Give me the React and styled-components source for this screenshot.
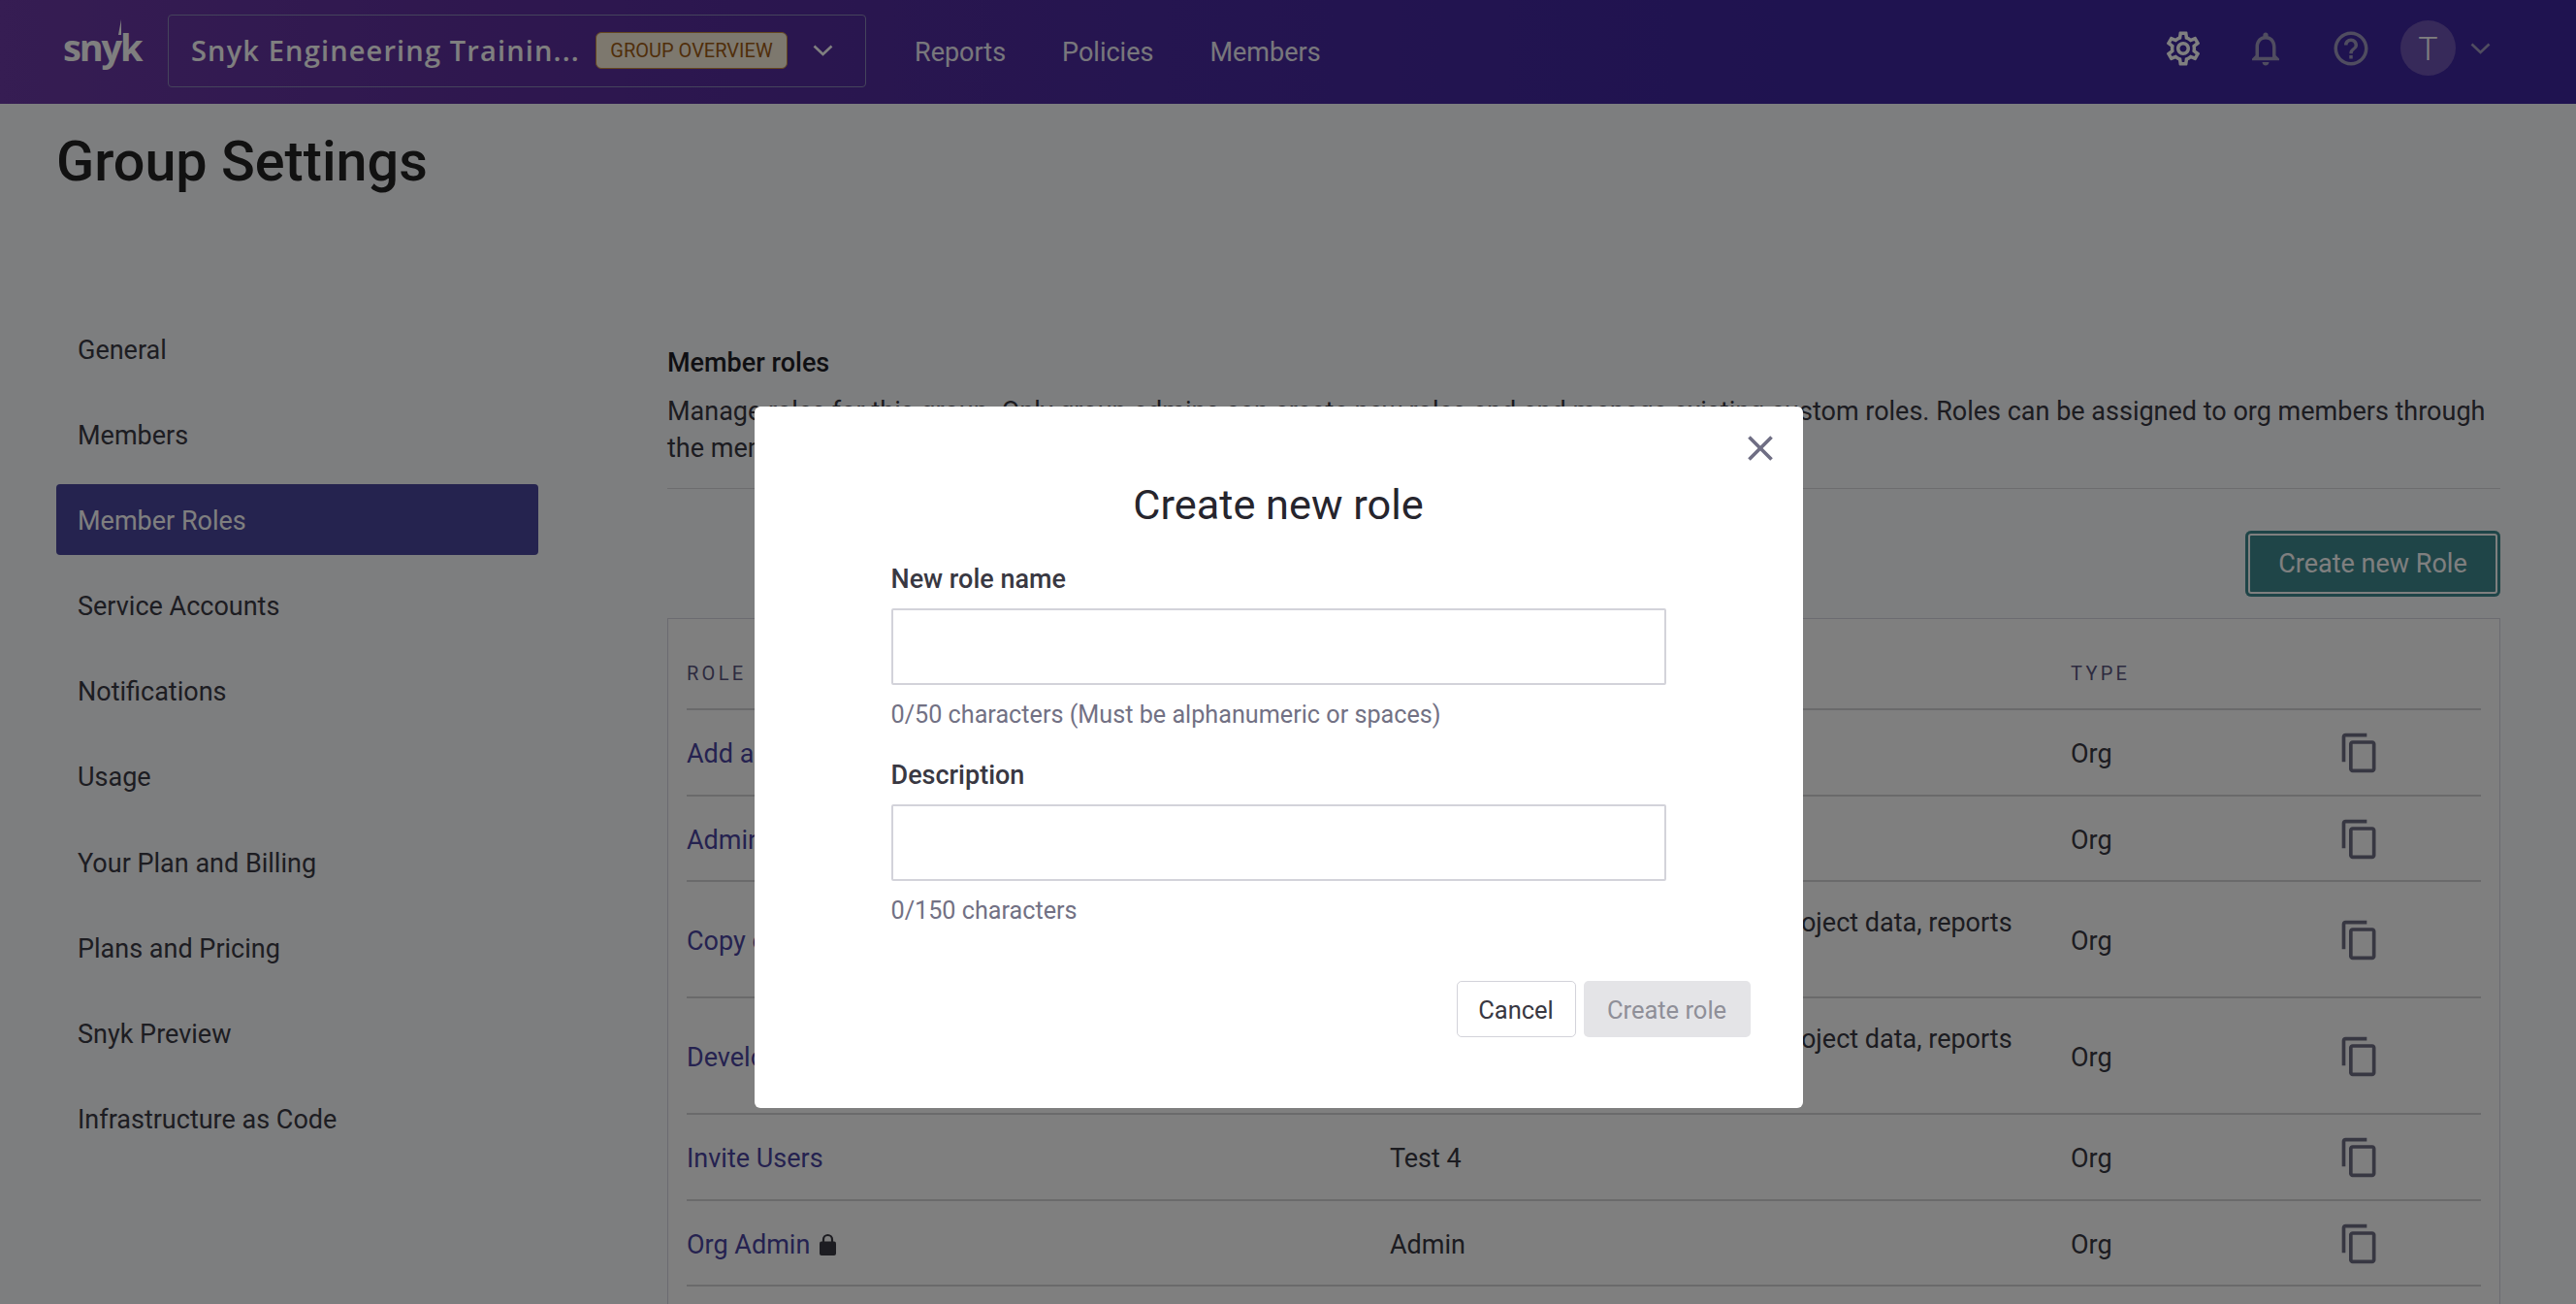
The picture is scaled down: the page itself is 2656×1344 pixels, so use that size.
import React from "react";
import styled, { createGlobalStyle } from "styled-components";
import {
  MdOutlineSettings,
  MdOutlineNotifications,
  MdHelpOutline,
  MdContentCopy,
  MdClose,
} from "react-icons/md";

const Global = createGlobalStyle`
  html, body { margin: 0; padding: 0; height: 100%; overflow: hidden; }
  body { background: #fbfcff; font-family: Roboto, "Liberation Sans", sans-serif; color: #393842; }
  * { box-sizing: border-box; }
`;

const Page = styled.div`
  height: 1344px;
  overflow: hidden;
`;

const Header = styled.header`
  height: 107px;
  display: flex;
  align-items: center;
  padding: 0 88px 3px 65px;
  background: linear-gradient(90deg, #6c3aa6 0, #5e2f9e 500px, #4a2aa0 1200px, #3e26a0 1900px, #3e26a0 100%);
`;

const LogoWrap = styled.div`
  position: relative;
  width: 108px;
  display: flex;
  align-items: center;
`;

const LogoText = styled.span`
  font-family: "Open Sans", sans-serif;
  font-weight: 700;
  font-size: 38px;
  letter-spacing: -2.2px;
  line-height: 40px;
  color: #fff;
  position: relative;
  top: -4px;
`;

const LogoSpike = styled.svg`
  position: absolute;
  left: 52px;
  top: -12px;
  width: 12px;
  height: 18px;
`;

const Switcher = styled.div`
  width: 720px;
  height: 75px;
  border: 1px solid #8a88b8;
  border-radius: 4px;
  display: flex;
  align-items: center;
  padding-left: 23px;
`;

const SwitcherName = styled.span`
  width: 417px;
  font-family: "Open Sans", sans-serif;
  font-weight: 600;
  font-size: 29px;
  letter-spacing: 1.15px;
  color: #fff;
  white-space: nowrap;
  position: relative;
  top: -1px;
`;

const GroupBadge = styled.span`
  width: 198px;
  height: 38px;
  display: flex;
  align-items: center;
  justify-content: center;
  border: 1px solid #c98a3c;
  border-radius: 6px;
  background: #fbf1dd;
  color: #a15c14;
  font-size: 20px;
  text-transform: uppercase;
`;

const Chevron = styled.svg`
  margin-left: ${(p) => p.$ml || 26}px;
  width: ${(p) => p.$w || 21}px;
  height: ${(p) => p.$h || 12}px;
  flex: none;
`;

const TopNav = styled.nav`
  display: flex;
  margin-left: 50px;
  gap: 58px;
  padding-top: 3px;
`;

const TopLink = styled.a`
  color: #f0eef8;
  font-size: 27px;
`;

const HeaderRight = styled.div`
  margin: -5px 0 0 auto;
  display: flex;
  align-items: center;
`;

const TopIcon = styled.span`
  display: flex;
  width: 42px;
  height: 42px;
  margin-right: ${(p) => p.$mr}px;
  color: ${(p) => p.$c};
  font-size: ${(p) => p.$s || 42}px;
  align-items: center;
  justify-content: center;
`;

const Avatar = styled.span`
  width: 57px;
  height: 57px;
  border-radius: 50%;
  background: #6e54b4;
  color: #fff;
  display: flex;
  align-items: center;
  justify-content: center;
  font-size: 34px;
  font-weight: 300;
`;

const Main = styled.main`
  padding: 0 78px 0 58px;
`;

const PageTitle = styled.h1`
  margin: 0;
  height: 216px;
  padding-top: 26px;
  font-size: 57.5px;
  line-height: 68px;
  font-weight: 500;
  color: #222;
`;

const Columns = styled.div`
  display: grid;
  grid-template-columns: 497px 1fr;
  column-gap: 133px;
`;

const SideNav = styled.nav`
  display: flex;
  flex-direction: column;
  gap: 15.2px;
`;

const SideItem = styled.a`
  height: 73px;
  display: flex;
  align-items: center;
  padding: 2px 0 0 22px;
  font-size: 27px;
  border-radius: 4px;
  background: ${(p) => (p.$active ? "#4b469e" : "transparent")};
  color: ${(p) => (p.$active ? "#fff" : "#3b3a44")};
`;

const Content = styled.section`
  padding-top: 32px;
  min-width: 0;
`;

const SectionTitle = styled.h2`
  margin: 0;
  font-size: 27px;
  line-height: 38px;
  font-weight: 500;
  color: #1f1f26;
`;

const SectionText = styled.p`
  margin: 12px 0 0;
  padding-bottom: 22px;
  font-size: 27px;
  line-height: 38px;
  border-bottom: 1px solid #d8d8de;
  color: #393842;
`;

const ActionRow = styled.div`
  margin-top: 43px;
  display: flex;
  justify-content: flex-end;
`;

const PrimaryButton = styled.button`
  width: 263px;
  height: 68px;
  border: none;
  box-shadow: inset 0 0 0 3px #3e8a90, inset 0 0 0 5px #fff;
  border-radius: 6px;
  background: #3e8a90;
  color: #fff;
  font-family: inherit;
  font-size: 27px;
`;

const TableBox = styled.div`
  margin-top: 22px;
  border: 1px solid #d6d6e2;
  padding: 0 19px 60px;
  background: #fff;
`;

const Row = styled.div`
  display: grid;
  grid-template-columns: 725px 702px 275px 1fr;
  align-items: center;
  min-height: 88.5px;
  padding: 23px 0 19px;
  font-size: 27px;
  line-height: 38px;
  border-bottom: 2px solid #d4d4d6;
`;

const HeadRow = styled(Row)`
  height: 94px;
  min-height: 0;
  align-items: end;
  padding: 0 0 17px;
  font-size: 20px;
  letter-spacing: 3.3px;
  color: #5a5680;
  text-transform: uppercase;
`;

const RoleLink = styled.a`
  color: #4b45a1;
  display: flex;
  align-items: center;
  gap: 10px;
`;

const Cell = styled.span`
  color: #393842;
  padding-right: 30px;
`;

const CopyBtn = styled.span`
  display: flex;
  color: #6f6e84;
  font-size: 44px;
  margin: -2px 0 0 1px;
`;

const LockIcon = styled.svg`
  width: 17px;
  height: 23px;
  flex: none;
`;

const Overlay = styled.div`
  position: fixed;
  inset: 0;
  background: rgba(0, 0, 0, 0.5);
  display: flex;
  justify-content: center;
  align-items: flex-start;
  padding: 419px 20px 0 0;
`;

const Modal = styled.div`
  position: relative;
  width: 1081px;
  height: 723px;
  background: #fff;
  border-radius: 6px;
  padding: 72px 54px 0 141px;
  display: flex;
  flex-direction: column;
`;

const CloseBtn = styled.span`
  position: absolute;
  top: 21px;
  right: 22px;
  display: flex;
  color: #6f6e84;
  font-size: 44px;
`;

const ModalTitle = styled.h3`
  margin: 0 0 27px -87px;
  text-align: center;
  font-size: 43.3px;
  line-height: 60px;
  font-weight: 400;
  color: #26252d;
`;

const Field = styled.div`
  width: 799px;
  display: flex;
  flex-direction: column;
  margin-bottom: 24px;
`;

const FieldLabel = styled.label`
  font-size: 27px;
  line-height: 38px;
  font-weight: 500;
  color: #393842;
  margin-bottom: 11px;
`;

const TextInput = styled.input`
  width: 100%;
  height: 79px;
  border: 2px solid #d3d3da;
  border-radius: 2px;
  background: #fff;
  outline: none;
`;

const Helper = styled.span`
  margin-top: 12px;
  font-size: 25.2px;
  line-height: 38px;
  color: #727184;
`;

const ModalFooter = styled.div`
  margin-top: 29px;
  display: flex;
  justify-content: flex-end;
  gap: 8px;
`;

const GhostButton = styled.button`
  width: 123px;
  height: 58px;
  padding-top: 2px;
  border: 1px solid #d3d3da;
  border-radius: 5px;
  background: #fff;
  color: #393842;
  font-family: inherit;
  font-size: 25.5px;
`;

const DisabledButton = styled.button`
  width: 172px;
  height: 58px;
  padding-top: 2px;
  border: none;
  border-radius: 5px;
  background: #e4e4e7;
  color: #8f8f98;
  font-family: inherit;
  font-size: 25.5px;
`;

const sideItems = [
  "General",
  "Members",
  "Member Roles",
  "Service Accounts",
  "Notifications",
  "Usage",
  "Your Plan and Billing",
  "Plans and Pricing",
  "Snyk Preview",
  "Infrastructure as Code",
];

const longDesc = "Developers' roles can manage all project data, reports and more";

const roles = [
  { name: "Add and Remove", desc: "Test 1" },
  { name: "Admin Copy", desc: "Test 2" },
  { name: "Copy of Developer", desc: longDesc },
  { name: "Developer", desc: longDesc },
  { name: "Invite Users", desc: "Test 4" },
  { name: "Org Admin", desc: "Admin", locked: true },
];

const ChevronIcon = ({ ml, w, h, color }) => (
  <Chevron $ml={ml} $w={w} $h={h} viewBox="0 0 21 12" fill="none">
    <polyline points="1.5,1.5 10.5,10 19.5,1.5" stroke={color} strokeWidth="2.6" />
  </Chevron>
);

const Padlock = () => (
  <LockIcon viewBox="0 0 17 23">
    <path d="M4 10V6.5a4.5 4.5 0 0 1 9 0V10" fill="none" stroke="#393842" strokeWidth="2.2" />
    <rect x="0" y="8.5" width="17" height="14.5" rx="2" fill="#393842" />
  </LockIcon>
);

export default function App() {
  return (
    <>
      <Global />
      <Page>
        <Header>
          <LogoWrap>
            <LogoText>snyk</LogoText>
            <LogoSpike viewBox="0 0 12 18">
              <path d="M8 0 L8 16 L5 16 Z" fill="#fff" />
            </LogoSpike>
          </LogoWrap>
          <Switcher>
            <SwitcherName>Snyk Engineering Trainin...</SwitcherName>
            <GroupBadge>Group Overview</GroupBadge>
            <ChevronIcon color="#fff" />
          </Switcher>
          <TopNav>
            <TopLink>Reports</TopLink>
            <TopLink>Policies</TopLink>
            <TopLink>Members</TopLink>
          </TopNav>
          <HeaderRight>
            <TopIcon $mr={43} $c="#fff"><MdOutlineSettings /></TopIcon>
            <TopIcon $mr={46} $c="#a09ac0" $s={44}><MdOutlineNotifications /></TopIcon>
            <TopIcon $mr={30} $c="#a09ac0"><MdHelpOutline /></TopIcon>
            <Avatar>T</Avatar>
            <ChevronIcon ml={15} w={21} h={12} color="#a09ac0" />
          </HeaderRight>
        </Header>
        <Main>
          <PageTitle>Group Settings</PageTitle>
          <Columns>
            <SideNav>
              {sideItems.map((s) => (
                <SideItem key={s} $active={s === "Member Roles"}>{s}</SideItem>
              ))}
            </SideNav>
            <Content>
              <SectionTitle>Member roles</SectionTitle>
              <SectionText>
                Manage roles for this group. Only group admins can create new roles and and manage existing custom roles. Roles can be assigned to org members through the members page.
              </SectionText>
              <ActionRow>
                <PrimaryButton>Create new Role</PrimaryButton>
              </ActionRow>
              <TableBox>
                <HeadRow>
                  <span>Role</span>
                  <span>Description</span>
                  <span>Type</span>
                  <span />
                </HeadRow>
                {roles.map((r) => (
                  <Row key={r.name}>
                    <RoleLink>
                      {r.name}
                      {r.locked && <Padlock />}
                    </RoleLink>
                    <Cell>{r.desc}</Cell>
                    <Cell>Org</Cell>
                    <CopyBtn><MdContentCopy /></CopyBtn>
                  </Row>
                ))}
              </TableBox>
            </Content>
          </Columns>
        </Main>
      </Page>
      <Overlay>
        <Modal>
          <CloseBtn><MdClose /></CloseBtn>
          <ModalTitle>Create new role</ModalTitle>
          <Field>
            <FieldLabel>New role name</FieldLabel>
            <TextInput />
            <Helper>0/50 characters (Must be alphanumeric or spaces)</Helper>
          </Field>
          <Field>
            <FieldLabel>Description</FieldLabel>
            <TextInput />
            <Helper>0/150 characters</Helper>
          </Field>
          <ModalFooter>
            <GhostButton>Cancel</GhostButton>
            <DisabledButton>Create role</DisabledButton>
          </ModalFooter>
        </Modal>
      </Overlay>
    </>
  );
}
